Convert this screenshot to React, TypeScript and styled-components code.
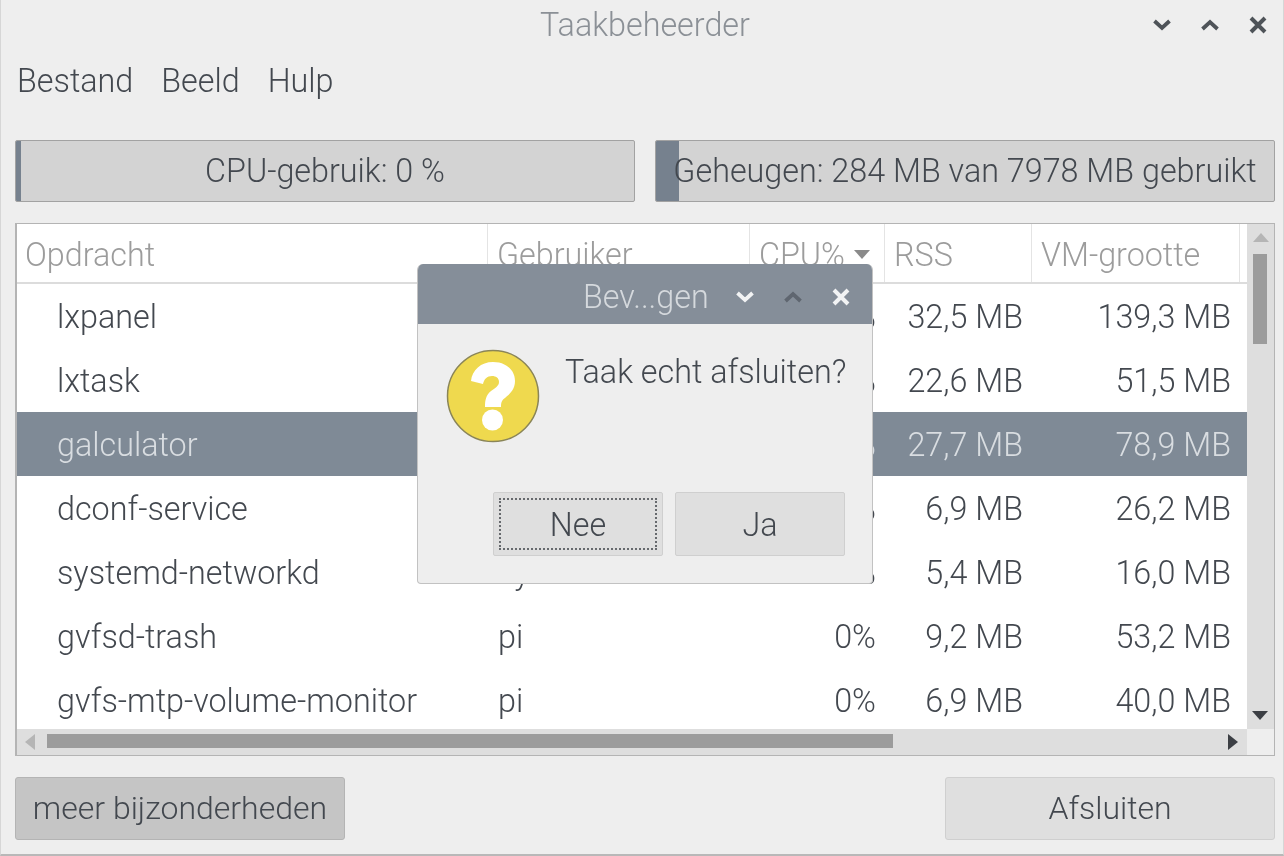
import React from 'react';
import styled, { createGlobalStyle } from 'styled-components';

const GlobalStyle = createGlobalStyle`
  html, body {
    margin: 0;
    padding: 0;
    background: #eeeeee;
  }

  body {
    font-family: Roboto, "Liberation Sans", sans-serif;
    font-size: 32.3px;
    font-weight: 300;
    color: #43484f;
  }
`;

const Window = styled.div`
  position: relative;
  width: 1284px;
  height: 856px;
  box-sizing: border-box;
  overflow: hidden;
  display: flex;
  flex-direction: column;
  background: #eeeeee;
  border-left: 1px solid #d6d6d6;
  border-right: 1px solid #d6d6d6;
  border-bottom: 2px solid #b8b8b8;
  filter: blur(0.45px);
`;

const TitleBar = styled.header`
  position: relative;
  height: 50px;
  flex: none;
  display: flex;
  align-items: center;
  justify-content: center;
  padding-left: 6px;
  color: #8b9096;
`;

const WindowButtons = styled.div`
  position: absolute;
  top: 0;
  right: 15px;
  height: 50px;
  display: flex;
  align-items: center;
  gap: 28px;
  color: #4e5358;
`;

const MenuBar = styled.nav`
  height: 60px;
  box-sizing: border-box;
  padding: 2px 0 0 16px;
  flex: none;
  display: flex;
  align-items: center;
  gap: 28px;
`;

const MeterRow = styled.section`
  display: flex;
  gap: 20px;
  margin: 30px 8px 0 14px;
  flex: none;
`;

const Meter = styled.div`
  position: relative;
  flex: 1;
  height: 62px;
  box-sizing: border-box;
  display: flex;
  align-items: center;
  justify-content: center;
  background: #d3d3d3;
  border: 1px solid #a2a2a2;
  border-radius: 2px;
  overflow: hidden;
  white-space: nowrap;
`;

const MeterFill = styled.div<{ $width: number }>`
  position: absolute;
  left: 0;
  top: 0;
  bottom: 0;
  width: ${(p) => p.$width}px;
  background: #76818e;
`;

const MeterLabel = styled.span`
  position: relative;
`;

const ListFrame = styled.section`
  flex: none;
  margin: 21px 8px 0 14px;
  height: 533px;
  box-sizing: border-box;
  border: 1px solid #b4b4b4;
  border-left-width: 2px;
  display: grid;
  grid-template-columns: 1fr 27px;
  grid-template-rows: 1fr 26px;
  background: #ffffff;
`;

const TableArea = styled.div`
  overflow: hidden;
  min-width: 0;
`;

const Row = styled.div`
  display: grid;
  grid-template-columns: 471px 262px 135px 147px 208px 7px;
  white-space: nowrap;
`;

const HeaderRow = styled(Row)`
  height: 60px;
  box-sizing: border-box;
  border-bottom: 2px solid #dcdcdc;
  color: #9c9c9c;
`;

const HeaderCell = styled.div`
  display: flex;
  align-items: center;
  gap: 9px;
  padding: 3px 0 0 9px;
  border-right: 1px solid #e4e4e4;
  overflow: hidden;

  &:first-child {
    padding-left: 8px;
  }
`;

const DataRow = styled(Row)<{ $selected?: boolean }>`
  height: 64px;
  box-sizing: border-box;
  padding-top: 2px;
  align-items: center;
  background: ${(p) => (p.$selected ? '#7f8a96' : 'transparent')};
  color: ${(p) => (p.$selected ? '#d9dde1' : 'inherit')};
`;

const NameCell = styled.div`
  padding-left: 40px;
`;

const UserCell = styled.div`
  padding-left: 10px;
  overflow: hidden;
`;

const NumberCell = styled.div`
  text-align: right;
  padding-right: 9px;
`;

const VerticalBar = styled.div`
  position: relative;
  background: #dedede;
`;

const VerticalThumb = styled.div`
  position: absolute;
  top: 30px;
  left: 6px;
  width: 14px;
  height: 90px;
  background: #9c9c9c;
`;

const ArrowSlot = styled.div<{ $top?: number; $bottom?: number; $left?: number; $right?: number }>`
  position: absolute;
  display: flex;
  ${(p) => (p.$top !== undefined ? `top: ${p.$top}px;` : '')}
  ${(p) => (p.$bottom !== undefined ? `bottom: ${p.$bottom}px;` : '')}
  ${(p) => (p.$left !== undefined ? `left: ${p.$left}px;` : '')}
  ${(p) => (p.$right !== undefined ? `right: ${p.$right}px;` : '')}
`;

const HorizontalBar = styled.div`
  position: relative;
  background: #dedede;
`;

const HorizontalThumb = styled.div`
  position: absolute;
  left: 30px;
  top: 5px;
  width: 846px;
  height: 14px;
  background: #9c9c9c;
`;

const Corner = styled.div`
  background: #eeeeee;
`;

const Footer = styled.footer`
  flex: none;
  display: flex;
  justify-content: space-between;
  margin: 21px 8px 0 14px;
`;

const Button = styled.button<{ $pressed?: boolean; $width: number }>`
  width: ${(p) => p.$width}px;
  height: 63px;
  padding: 0 0 2px;
  font: inherit;
  font-size: 32px;
  color: inherit;
  background: ${(p) => (p.$pressed ? '#c5c5c5' : '#dfdfdf')};
  border: 1px solid ${(p) => (p.$pressed ? '#b4b4b4' : '#cfcfcf')};
  border-radius: 3px;
`;

const Dialog = styled.div`
  position: absolute;
  left: 416px;
  top: 264px;
  width: 456px;
  height: 320px;
  box-sizing: border-box;
  border: 1px solid #c2c2c2;
  border-top: none;
  border-radius: 6px 6px 4px 4px;
  background: #eeeeee;
  overflow: hidden;
  display: flex;
  flex-direction: column;
`;

const DialogTitle = styled.div`
  position: relative;
  flex: none;
  height: 60px;
  display: flex;
  align-items: center;
  background: #858e99;
  color: #d5d9dd;
  padding: 6px 0 0 165px;
  box-sizing: border-box;
`;

const DialogButtons = styled.div`
  position: absolute;
  top: 3px;
  right: 21px;
  height: 60px;
  display: flex;
  align-items: center;
  gap: 28px;
  color: #f2f3f4;
`;

const DialogBody = styled.div`
  display: flex;
  align-items: flex-start;
  gap: 25px;
  padding: 25px 0 0 28px;
  height: 168px;
  box-sizing: border-box;
`;

const Question = styled.p`
  margin: 4px 0 0;
  white-space: nowrap;
`;

const DialogActions = styled.div`
  display: flex;
  justify-content: flex-end;
  gap: 12px;
  padding-right: 27px;
`;

const DialogButton = styled.button<{ $focused?: boolean }>`
  position: relative;
  width: 170px;
  height: 64px;
  padding: 2px 0 0;
  font: inherit;
  color: inherit;
  background: #dfdfdf;
  border: 1px solid #cfcfcf;
  border-radius: 2px;

  ${(p) =>
    p.$focused
      ? `&::after {
          content: '';
          position: absolute;
          inset: 5px;
          border: 2px dotted #66696d;
        }`
      : ''}
`;

const Chevron = ({ up, color }: { up?: boolean; color?: string }) => (
  <svg width="20" height="20" viewBox="0 0 20 20" aria-hidden="true">
    <path
      d={up ? 'M2.5 14 10 7l7.5 7' : 'M2.5 6 10 13l7.5-7'}
      fill="none"
      stroke={color || 'currentColor'}
      strokeWidth="3.8"
    />
  </svg>
);

const Cross = () => (
  <svg width="20" height="20" viewBox="0 0 20 20" aria-hidden="true">
    <path d="M3 3l14 14M17 3L3 17" fill="none" stroke="currentColor" strokeWidth="4" />
  </svg>
);

const Triangle = ({ dir, color }: { dir: 'up' | 'down' | 'left' | 'right'; color: string }) => {
  const points = {
    up: '0,10 16,10 8,1',
    down: '0,1 16,1 8,10',
    left: '11,0 11,16 1,8',
    right: '1,0 1,16 11,8',
  }[dir];
  const horizontal = dir === 'left' || dir === 'right';
  return (
    <svg width={horizontal ? 12 : 16} height={horizontal ? 16 : 11} aria-hidden="true">
      <polygon points={points} fill={color} />
    </svg>
  );
};

const QuestionIcon = () => (
  <svg width="94" height="94" viewBox="0 0 94 94" aria-hidden="true">
    <circle cx="47" cy="47" r="45.5" fill="#efd94e" stroke="#8a8558" strokeWidth="1.5" />
    <path
      d="M25 32c1-11 10-19 22-19 13 0 22 8 22 19 0 8-5 13-10 17-3 2-4 4-4 9H39c0-7 1-12 6-16 4-3 8-5 8-9 0-4-3-6-7-6-5 0-8 3-9 8z"
      fill="#ffffff"
    />
    <circle cx="46.5" cy="71" r="10.5" fill="#ffffff" />
  </svg>
);

type Proc = { name: string; user: string; cpu: string; rss: string; vm: string; selected?: boolean };

const processes: Proc[] = [
  { name: 'lxpanel', user: 'pi', cpu: '0%', rss: '32,5 MB', vm: '139,3 MB' },
  { name: 'lxtask', user: 'pi', cpu: '0%', rss: '22,6 MB', vm: '51,5 MB' },
  { name: 'galculator', user: 'pi', cpu: '0%', rss: '27,7 MB', vm: '78,9 MB', selected: true },
  { name: 'dconf-service', user: 'pi', cpu: '0%', rss: '6,9 MB', vm: '26,2 MB' },
  { name: 'systemd-networkd', user: 'systemd-network', cpu: '0%', rss: '5,4 MB', vm: '16,0 MB' },
  { name: 'gvfsd-trash', user: 'pi', cpu: '0%', rss: '9,2 MB', vm: '53,2 MB' },
  { name: 'gvfs-mtp-volume-monitor', user: 'pi', cpu: '0%', rss: '6,9 MB', vm: '40,0 MB' },
];

const App = () => (
  <>
    <GlobalStyle />
    <Window>
      <TitleBar>
        Taakbeheerder
        <WindowButtons>
          <Chevron />
          <Chevron up />
          <Cross />
        </WindowButtons>
      </TitleBar>
      <MenuBar>
        <span>Bestand</span>
        <span>Beeld</span>
        <span>Hulp</span>
      </MenuBar>
      <MeterRow>
        <Meter>
          <MeterFill $width={5} />
          <MeterLabel>CPU-gebruik: 0 %</MeterLabel>
        </Meter>
        <Meter>
          <MeterFill $width={23} />
          <MeterLabel>Geheugen: 284 MB van 7978 MB gebruikt</MeterLabel>
        </Meter>
      </MeterRow>
      <ListFrame>
        <TableArea>
          <HeaderRow>
            <HeaderCell>Opdracht</HeaderCell>
            <HeaderCell>Gebruiker</HeaderCell>
            <HeaderCell>
              CPU%
              <Triangle dir="down" color="#8a8a8a" />
            </HeaderCell>
            <HeaderCell>RSS</HeaderCell>
            <HeaderCell>VM-grootte</HeaderCell>
            <HeaderCell />
          </HeaderRow>
          {processes.map((proc) => (
            <DataRow key={proc.name} $selected={proc.selected}>
              <NameCell>{proc.name}</NameCell>
              <UserCell>{proc.user}</UserCell>
              <NumberCell>{proc.cpu}</NumberCell>
              <NumberCell>{proc.rss}</NumberCell>
              <NumberCell>{proc.vm}</NumberCell>
            </DataRow>
          ))}
        </TableArea>
        <VerticalBar>
          <ArrowSlot $top={8} $left={6}>
            <Triangle dir="up" color="#b5b5b5" />
          </ArrowSlot>
          <VerticalThumb />
          <ArrowSlot $bottom={8} $left={5}>
            <Triangle dir="down" color="#3c3f44" />
          </ArrowSlot>
        </VerticalBar>
        <HorizontalBar>
          <ArrowSlot $top={5} $left={7}>
            <Triangle dir="left" color="#b5b5b5" />
          </ArrowSlot>
          <HorizontalThumb />
          <ArrowSlot $top={5} $right={8}>
            <Triangle dir="right" color="#3c3f44" />
          </ArrowSlot>
        </HorizontalBar>
        <Corner />
      </ListFrame>
      <Footer>
        <Button $pressed $width={330}>meer bijzonderheden</Button>
        <Button $width={330}>Afsluiten</Button>
      </Footer>
      <Dialog>
        <DialogTitle>
          Bev...gen
          <DialogButtons>
            <Chevron />
            <Chevron up color="#5f6670" />
            <Cross />
          </DialogButtons>
        </DialogTitle>
        <DialogBody>
          <QuestionIcon />
          <Question>Taak echt afsluiten?</Question>
        </DialogBody>
        <DialogActions>
          <DialogButton $focused>Nee</DialogButton>
          <DialogButton>Ja</DialogButton>
        </DialogActions>
      </Dialog>
    </Window>
  </>
);

export default App;
